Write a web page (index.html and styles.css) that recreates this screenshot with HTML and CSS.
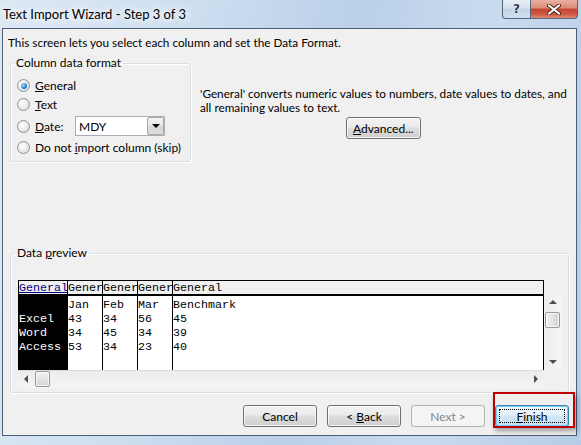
FILE: index.html
```html
<!DOCTYPE html>
<html>
<head>
<meta charset="utf-8">
<link rel="stylesheet" href="styles.css">
</head>
<body>
<div class="window">
  <div class="titlebar">
    <span class="title">Text Import Wizard - Step 3 of 3</span>
    <div class="caption-btns">
      <div class="cbtn help">?</div>
      <div class="cbtn close">
        <svg width="14" height="11" viewBox="0 0 14 11">
          <path d="M2 1.5 L12 9.5 M12 1.5 L2 9.5" stroke="#4a2018" stroke-width="4" stroke-linecap="round"/>
          <path d="M2 1.5 L12 9.5 M12 1.5 L2 9.5" stroke="#ffffff" stroke-width="2.2" stroke-linecap="round"/>
        </svg>
      </div>
    </div>
  </div>
  <div class="client">
    <p class="intro">This screen lets you select each column and set the Data Format.</p>
    <div class="top">
      <fieldset class="group fmt">
        <legend>Column data format</legend>
        <div class="opts">
          <div class="opt"><span class="radio checked"></span><span><u>G</u>eneral</span></div>
          <div class="opt"><span class="radio"></span><span><u>T</u>ext</span></div>
          <div class="opt date"><span class="radio"></span><span class="date-lbl"><u>D</u>ate:</span>
            <div class="combo"><span class="combo-val">MDY</span><span class="combo-btn"><span class="tri-down"></span></span></div>
          </div>
          <div class="opt skip"><span class="radio"></span><span>Do not <u>i</u>mport column (skip)</span></div>
        </div>
      </fieldset>
      <div class="desc">
        <div class="desc-text">
          <p>'General' converts numeric values to numbers, date values to dates, and</p>
          <p>all remaining values to text.</p>
        </div>
        <button class="btn adv"><span><u>A</u>dvanced...</span></button>
      </div>
    </div>
    <fieldset class="group preview">
      <legend>Data <u>p</u>review</legend>
      <div class="pv">
        <div class="pv-table">
          <div class="col c1"><div class="hd"><span class="hd-sel">General</span></div><div class="bd">
Excel
Word
Access</div></div>
          <div class="col cn"><div class="hd">Gener</div><div class="bd">Jan
43
34
53</div></div>
          <div class="col cn"><div class="hd">Gener</div><div class="bd">Feb
34
45
34</div></div>
          <div class="col cn"><div class="hd">Gener</div><div class="bd">Mar
56
34
23</div></div>
          <div class="col c5"><div class="hd">General</div><div class="bd">Benchmark
45
39
40</div></div>
        </div>
        <div class="vscroll">
          <div class="arr-btn"><span class="tri-up"></span></div>
          <div class="thumb vthumb"></div>
          <div class="spacer"></div>
          <div class="arr-btn"><span class="tri-down sm"></span></div>
        </div>
        <div class="hscroll">
          <div class="arr-btn"><span class="tri-left"></span></div>
          <div class="thumb hthumb"></div>
          <div class="spacer"></div>
          <div class="arr-btn"><span class="tri-right"></span></div>
        </div>
      </div>
    </fieldset>
    <div class="buttons">
      <button class="btn"><span>Cancel</span></button>
      <button class="btn"><span>&lt; <u>B</u>ack</span></button>
      <button class="btn disabled"><span>Next &gt;</span></button>
      <button class="btn finish"><span><u>F</u>inish</span></button>
    </div>
  </div>
  <div class="annot"></div>
</div>
</body>
</html>
```

FILE: styles.css
```css
* { box-sizing: border-box; }
html, body { margin: 0; padding: 0; }
body {
  width: 581px;
  height: 445px;
  overflow: hidden;
  font-family: Lato, "Liberation Sans", sans-serif;
  font-size: 12px;
  color: #000;
}
p { margin: 0; }
u { text-decoration: underline; text-underline-offset: 1px; }

.window {
  position: relative;
  width: 581px;
  height: 445px;
  padding: 0 4px 9px 2px;
  display: flex;
  flex-direction: column;
  background: linear-gradient(100deg, #dce8f4 0%, #cddef0 30%, #b9d0e8 55%, #c9dbee 75%, #b5cde6 100%);
}

.titlebar {
  height: 28px;
  flex: none;
  display: flex;
  justify-content: space-between;
  align-items: flex-start;
  margin-right: -1px;
}
.title {
  margin-top: 6px;
  padding-left: 1px;
  line-height: 16px;
  font-size: 13px;
  color: #000;
  text-shadow: 0 0 6px #fff, 0 0 10px #fff, 0 0 14px #fff;
}
.caption-btns { display: flex; }
.cbtn {
  height: 19px;
  border: 1px solid #56677c;
  border-top: none;
  display: flex;
  align-items: center;
  justify-content: center;
}
.help {
  width: 28px;
  border-right: none;
  border-radius: 0 0 0 4px;
  background: linear-gradient(#e8eff7, #d6e2ef 45%, #c3d4e7 50%, #d0dfef);
  font-family: "DejaVu Sans", sans-serif;
  font-size: 12px;
  font-weight: bold;
  color: #2d3c4e;
  text-shadow: 0 0 2px #fff;
}
.close {
  width: 48px;
  border-radius: 0 0 4px 0;
  background: linear-gradient(#eab0a2, #dc8a76 45%, #c4432f 50%, #cf5a43 80%, #e48b74);
}

.client {
  flex: 1;
  background: #f0f0f0;
  border: 1px solid #4f5f73;
  display: flex;
  flex-direction: column;
}

.intro {
  margin: 7px 0 0 5px;
  line-height: 14px;
  font-size: 11.75px;
}

.top { display: flex; margin-top: 6px; }

fieldset.group {
  min-width: 0;
  border: 1px solid #d5dfe5;
  border-radius: 3px;
  box-shadow: inset 1px 1px 0 #fff, 1px 1px 0 #fff;
}
legend {
  padding: 0 2px;
  margin-left: -3px;
  line-height: 14px;
}
fieldset.fmt {
  margin: 0 0 0 7px;
  width: 181px;
  padding: 0 0 5px 6px;
}
.opts { margin-top: 6px; display: flex; flex-direction: column; }
.opt { display: flex; align-items: center; height: 19px; white-space: nowrap; }
.opt.date { height: 24px; }
.opt.skip { height: 18px; }
.radio {
  position: relative;
  flex: none;
  width: 13px;
  height: 13px;
  margin-right: 5px;
  border-radius: 50%;
  border: 1px solid #8d9196;
  background: radial-gradient(circle at 40% 40%, #ffffff, #e6e6e6 60%, #cfd2d5);
}
.radio.checked::after {
  content: "";
  position: absolute;
  left: 2.5px;
  top: 2.5px;
  width: 6px;
  height: 6px;
  border-radius: 50%;
  background: radial-gradient(circle at 35% 35%, #a6dcfa, #2a7fc4 60%, #0f4f8c);
}
.date-lbl { width: 40px; }
.combo {
  width: 90px;
  height: 20px;
  border: 1px solid #abadb3;
  background: #fff;
  display: flex;
  align-items: center;
}
.combo-val { flex: 1; padding-left: 3px; }
.combo-btn {
  width: 17px;
  height: 18px;
  border: 1px solid #a8a8a8;
  border-radius: 2px;
  background: linear-gradient(#f3f3f3, #e6e6e6 50%, #d6d6d6 51%, #dedede);
  display: flex;
  align-items: center;
  justify-content: center;
}
.tri-down {
  width: 0; height: 0;
  border-left: 4px solid transparent;
  border-right: 4px solid transparent;
  border-top: 4px solid #000;
}
.tri-down.sm { border-top-color: #4e4e4e; }
.tri-up {
  width: 0; height: 0;
  border-left: 4px solid transparent;
  border-right: 4px solid transparent;
  border-bottom: 4px solid #4e4e4e;
}
.tri-left {
  width: 0; height: 0;
  border-top: 4px solid transparent;
  border-bottom: 4px solid transparent;
  border-right: 4px solid #4e4e4e;
}
.tri-right {
  width: 0; height: 0;
  border-top: 4px solid transparent;
  border-bottom: 4px solid transparent;
  border-left: 4px solid #4e4e4e;
}

.desc {
  margin: 31px 0 0 9px;
  display: flex;
  flex-direction: column;
  align-items: center;
}
.desc-text { line-height: 14px; white-space: nowrap; font-size: 11.75px; }

.btn {
  height: 22px;
  padding: 0;
  border: 1px solid #707070;
  border-radius: 3px;
  background: linear-gradient(#f2f2f2, #ebebeb 45%, #dddddd 50%, #cfcfcf);
  box-shadow: inset 0 0 0 1px rgba(255,255,255,0.75);
  font: inherit;
  color: #000;
  display: flex;
  align-items: center;
  justify-content: center;
  position: relative;
  white-space: pre;
}
.adv { width: 75px; margin-top: 2px; }

fieldset.preview {
  margin: 84px 0 0 7px;
  width: 559px;
  padding: 0 0 4px 7px;
}
.pv {
  margin-top: 20px;
  display: grid;
  grid-template-columns: 526px 17px;
  grid-template-rows: 90px 18px;
}
.pv-table {
  grid-column: 1;
  grid-row: 1;
  display: flex;
  border: 1px solid #000;
  border-bottom: none;
  background: #fff;
  font-family: "Liberation Mono", monospace;
  font-size: 11.667px;
}
.col {
  display: flex;
  flex-direction: column;
  border-right: 1px solid #000;
  overflow: hidden;
  flex: none;
}
.c1 { width: 49px; }
.cn { width: 35px; }
.c5 { flex: 1; border-right: none; }
.hd {
  height: 15px;
  border-bottom: 2px solid #000;
  background: #f0f0f0;
  line-height: 15px;
  white-space: nowrap;
  overflow: hidden;
}
.hd-sel { color: #000080; text-decoration: underline; }
.bd {
  flex: 1;
  padding-top: 2px;
  line-height: 14px;
  white-space: pre;
}
.c1 .bd { background: #000; color: #fff; }

.vscroll {
  grid-column: 2;
  grid-row: 1;
  margin: 14px 0 0 1px;
  width: 16px;
  display: flex;
  flex-direction: column;
  background: linear-gradient(90deg, #ececec, #f5f5f5);
}
.hscroll {
  grid-column: 1;
  grid-row: 2;
  display: flex;
  border-top: 1px solid #dcdcdc;
  background: linear-gradient(#ececec, #f5f5f5);
}
.arr-btn {
  width: 16px;
  height: 16px;
  flex: none;
  display: flex;
  align-items: center;
  justify-content: center;
}
.spacer { flex: 1; }
.thumb {
  border: 1px solid #979797;
  border-radius: 2px;
  background: linear-gradient(90deg, #f4f4f4, #e3e3e3 50%, #d4d4d4);
  box-shadow: inset 0 0 0 1px rgba(255,255,255,0.7);
}
.vthumb { width: 15px; height: 16px; margin-top: 2px; }
.hthumb { width: 15px; height: 16px; margin-left: 1px; background: linear-gradient(#f4f4f4, #e3e3e3 50%, #d4d4d4); }

.buttons {
  margin-top: auto;
  padding: 0 7px 8px 0;
  display: flex;
  justify-content: flex-end;
  gap: 10px;
}
.buttons .btn { width: 74px; }
.btn.disabled {
  border-color: #adb2b5;
  background: #f4f4f4;
  box-shadow: none;
  color: #838383;
}
.btn.finish {
  border-color: #3c7fb1;
  background: linear-gradient(#eef7fc, #e3f1fa 45%, #d2e8f6 50%, #c6e0f2);
  box-shadow: inset 0 0 0 1px #6fd0f5;
}
.btn.finish::after {
  content: "";
  position: absolute;
  left: 3px; top: 3px; right: 3px; bottom: 3px;
  border: 1px dotted #000;
}

.annot {
  position: absolute;
  left: 493px;
  top: 392px;
  width: 82px;
  height: 36px;
  border: 2px solid #c00000;
  box-shadow: 2px 3px 5px rgba(0,0,0,0.35);
  pointer-events: none;
}
```
